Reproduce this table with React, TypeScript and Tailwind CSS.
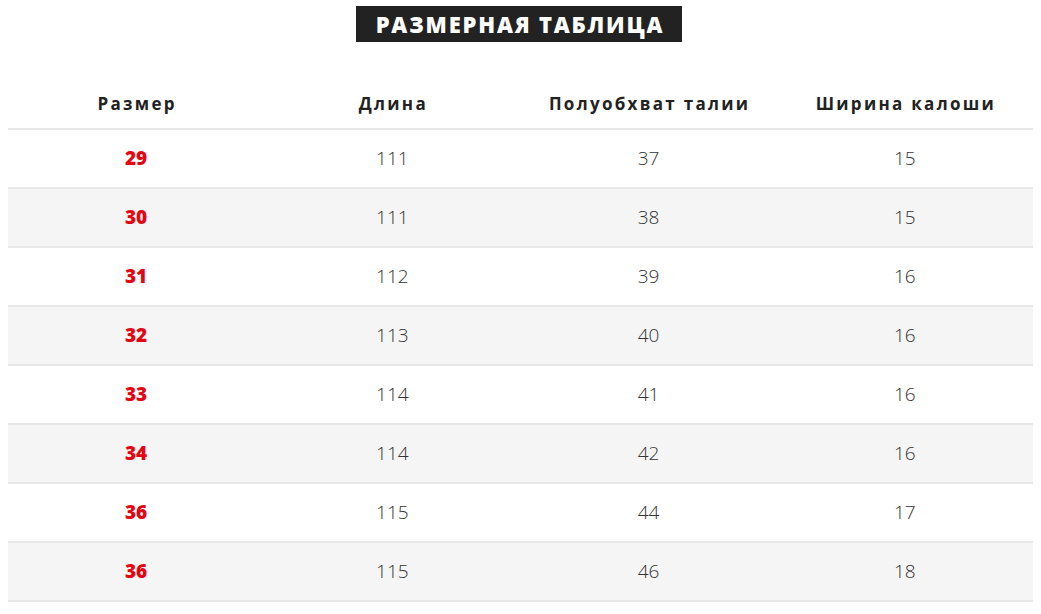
const rows = [
  ["29", "111", "37", "15"],
  ["30", "111", "38", "15"],
  ["31", "112", "39", "16"],
  ["32", "113", "40", "16"],
  ["33", "114", "41", "16"],
  ["34", "114", "42", "16"],
  ["36", "115", "44", "17"],
  ["36", "115", "46", "18"],
];

const headers = ["Размер", "Длина", "Полуобхват талии", "Ширина калоши"];

export default function App() {
  return (
    <div className="min-h-screen bg-white px-2 pt-[6px] font-['Open_Sans',sans-serif] text-[#333]">
      <div className="flex justify-center pr-[3px]">
        <h2 className="flex h-9 w-[326px] items-center justify-center bg-[#222] pl-[2px] text-[22px] font-extrabold tracking-[1.8px] text-white">
          РАЗМЕРНАЯ ТАБЛИЦА
        </h2>
      </div>

      <table className="mt-[37px] w-full table-fixed border-collapse">
        <thead>
          <tr className="h-[50px] border-b-2 border-[#e8e8e8]">
            {headers.map((h) => (
              <th key={h} className="pl-[2px] text-[17px] font-bold tracking-[2.3px] text-[#222]">
                {h}
              </th>
            ))}
          </tr>
        </thead>
        <tbody>
          {rows.map((r, i) => (
            <tr key={i} className={`h-[59px] border-b-2 border-[#e8e8e8] ${i % 2 ? "bg-[#f5f5f5]" : "bg-white"}`}>
              <td className="text-center text-[19px] font-extrabold text-[#e30613]">{r[0]}</td>
              <td className="text-center text-[19px] font-light">{r[1]}</td>
              <td className="text-center text-[19px] font-light">{r[2]}</td>
              <td className="text-center text-[19px] font-light">{r[3]}</td>
            </tr>
          ))}
        </tbody>
      </table>
    </div>
  );
}
